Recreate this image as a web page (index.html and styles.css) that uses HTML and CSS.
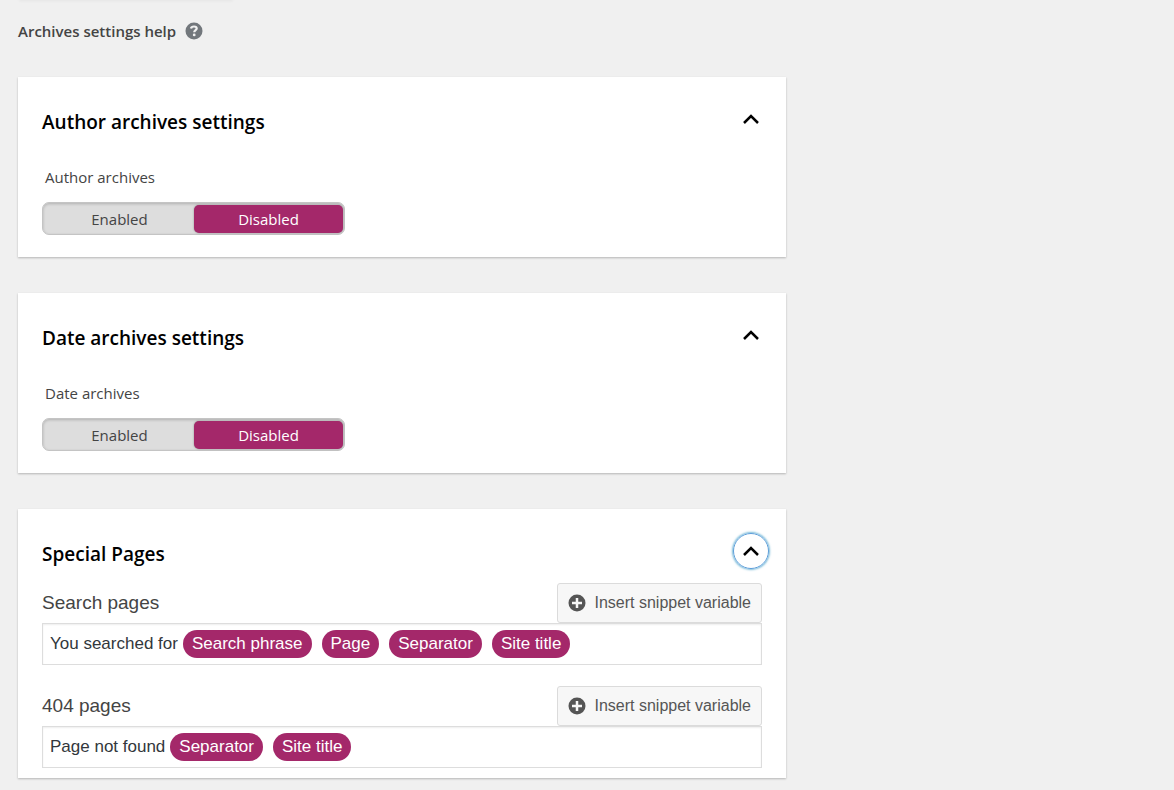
FILE: index.html
```html
<!DOCTYPE html>
<html lang="en">
<head>
    <meta charset="UTF-8">
    <meta name="viewport" content="width=device-width, initial-scale=1.0">
    <title>Archives settings</title>
    <link rel="stylesheet" href="styles.css">
</head>
<body>
    <div class="top-shadow"></div>
    <main class="container">
        <div class="help">
            <span>Archives settings help</span>
            <button type="button" class="help-button" aria-label="Help">
                <svg viewBox="0 0 18 18" width="18" height="18">
                    <circle cx="9" cy="9" r="8.5" fill="#72777c"/>
                    <path d="M6 6.500C6.300 5 7.400 4.500 9 4.500c1.700 0 2.700.7 2.700 1.900 0 1.700-2.500 1.600-2.500 3.900" fill="none" stroke="#f1f1f1" stroke-width="2.200"/>
                    <circle cx="9.200" cy="12.900" r="1.400" fill="#f1f1f1"/>
                </svg>
            </button>
        </div>

        <!-- Author archives -->
        <section class="card">
            <div class="card-header">
                <h2>Author archives settings</h2>
                <button type="button" class="collapse" aria-label="Collapse author archives settings">
                    <svg viewBox="0 0 18 12" width="18" height="12"><path d="M2 10l7-7 7 7"/></svg>
                </button>
            </div>
            <fieldset class="toggle">
                <legend>Author archives</legend>
                <div class="switch">
                    <input type="radio" name="author" id="authorOn">
                    <label for="authorOn">Enabled</label>
                    <input type="radio" name="author" id="authorOff" checked>
                    <label for="authorOff">Disabled</label>
                </div>
            </fieldset>
        </section>

        <!-- Date archives -->
        <section class="card">
            <div class="card-header">
                <h2>Date archives settings</h2>
                <button type="button" class="collapse" aria-label="Collapse date archives settings">
                    <svg viewBox="0 0 18 12" width="18" height="12"><path d="M2 10l7-7 7 7"/></svg>
                </button>
            </div>
            <fieldset class="toggle">
                <legend>Date archives</legend>
                <div class="switch">
                    <input type="radio" name="date" id="dateOn">
                    <label for="dateOn">Enabled</label>
                    <input type="radio" name="date" id="dateOff" checked>
                    <label for="dateOff">Disabled</label>
                </div>
            </fieldset>
        </section>

        <!-- Special pages -->
        <section class="card special">
            <div class="card-header">
                <h2>Special Pages</h2>
                <button type="button" class="collapse active" aria-label="Collapse special pages">
                    <svg viewBox="0 0 18 12" width="18" height="12"><path d="M2 10l7-7 7 7"/></svg>
                </button>
            </div>

            <div class="field">
                <div class="field-header">
                    <span class="field-label" id="searchLabel">Search pages</span>
                    <button type="button" class="insert">
                        <svg viewBox="0 0 18 18" width="18" height="18"><circle cx="9" cy="9" r="8.500"/><path d="M9 4v10M4 9h10"/></svg>
                        Insert snippet variable
                    </button>
                </div>
                <div class="editor" contenteditable="true" role="textbox" aria-labelledby="searchLabel"><span class="text">You searched for</span><span class="tag">Search phrase</span><span class="tag">Page</span><span class="tag">Separator</span><span class="tag">Site title</span></div>
            </div>

            <div class="field">
                <div class="field-header">
                    <span class="field-label" id="notFoundLabel">404 pages</span>
                    <button type="button" class="insert">
                        <svg viewBox="0 0 18 18" width="18" height="18"><circle cx="9" cy="9" r="8.500"/><path d="M9 4v10M4 9h10"/></svg>
                        Insert snippet variable
                    </button>
                </div>
                <div class="editor" contenteditable="true" role="textbox" aria-labelledby="notFoundLabel"><span class="text">Page not found</span><span class="tag">Separator</span><span class="tag">Site title</span></div>
            </div>
        </section>
    </main>
</body>
</html>
```
FILE: styles.css
```css
* {
    box-sizing: border-box;
}
body {
    margin: 0;
    background-color: #f0f0f0;
    font-family: "Segoe UI", "Open Sans", sans-serif;
    color: #444;
}
button {
    font: inherit;
    cursor: pointer;
}
svg {
    display: block;
}
.top-shadow {
    width: 212px;
    margin-left: 20px;
    box-shadow: 0 0 3px 1px rgba(0, 0, 0, 0.06);
}
.container {
    max-width: 804px;
    padding: 20px 18px 11px;
}
.help {
    display: flex;
    align-items: center;
    gap: 9px;
    height: 22px;
    margin-bottom: 35px;
    font-size: 15px;
    font-weight: 600;
}
.help-button {
    padding: 0;
    border: 0;
    background: none;
}
.card {
    margin-bottom: 36px;
    padding: 24px 24px 22px;
    background-color: #fff;
    box-shadow: 0 1px 2px rgba(0, 0, 0, 0.25);
}
.card-header {
    display: flex;
    justify-content: space-between;
    height: 42px;
}
.card-header h2 {
    margin: 0;
    font-size: 19px;
    font-weight: 600;
    line-height: 42px;
    color: #000;
}
.collapse {
    display: flex;
    align-items: center;
    justify-content: center;
    width: 36px;
    height: 36px;
    margin-right: -7px;
    padding: 0;
    border: 1px solid transparent;
    border-radius: 50%;
    background: none;
}
.collapse path {
    fill: none;
    stroke: #000;
    stroke-width: 2.5;
}
.collapse.active {
    border-color: #5b9dd9;
    box-shadow: 0 0 2px 1px rgba(30, 140, 190, 0.6);
}
.toggle {
    min-width: 0;
    margin: 0;
    padding: 0;
    border: 0;
}
.toggle legend {
    padding: 24px 3px 15px;
    font-size: 15px;
    line-height: 20px;
}
.switch {
    display: grid;
    grid-template-columns: 1fr 1fr;
    width: 303px;
    height: 33px;
    padding: 2px 1px 2px 2px;
    border: 1px solid #c4c4c4;
    border-radius: 7px;
    background-color: #ddd;
    box-shadow: inset 0 1px 3px rgba(0, 0, 0, 0.2);
}
.switch input {
    position: absolute;
    opacity: 0;
}
.switch label {
    border-radius: 5px;
    font-size: 15px;
    line-height: 28px;
    text-align: center;
    cursor: pointer;
}
.switch input:checked + label {
    background-color: #a4286a;
    box-shadow: 0 0 2px #888;
    color: #fff;
}
.special {
    margin-bottom: 0;
    padding-bottom: 10px;
    font-family: "Liberation Sans", Arial, sans-serif;
}
.special h2 {
    font-family: "Segoe UI", "Open Sans", sans-serif;
}
.field {
    margin-top: 21px;
}
.card-header + .field {
    margin-top: 8px;
}
.field-header {
    display: flex;
    justify-content: space-between;
    align-items: center;
}
.field-label {
    font-size: 19px;
}
.insert {
    display: flex;
    align-items: center;
    gap: 8px;
    height: 40px;
    padding: 0 10px;
    border: 1px solid #dbdbdb;
    border-radius: 3px;
    background-color: #f7f7f7;
    color: #555;
    font-size: 16px;
}
.insert circle {
    fill: #555;
}
.insert path {
    stroke: #f7f7f7;
    stroke-width: 2.5;
}
.editor {
    min-height: 42px;
    padding: 6px 7px;
    border: 1px solid #ddd;
    box-shadow: inset 0 1px 2px rgba(0, 0, 0, 0.07);
    color: #32373c;
    font-size: 17px;
    line-height: 28px;
}
.text {
    margin-right: 5px;
}
.tag {
    display: inline-block;
    margin-right: 10px;
    padding: 0 9px;
    border-radius: 14px;
    background-color: #a4286a;
    color: #fff;
}
```
